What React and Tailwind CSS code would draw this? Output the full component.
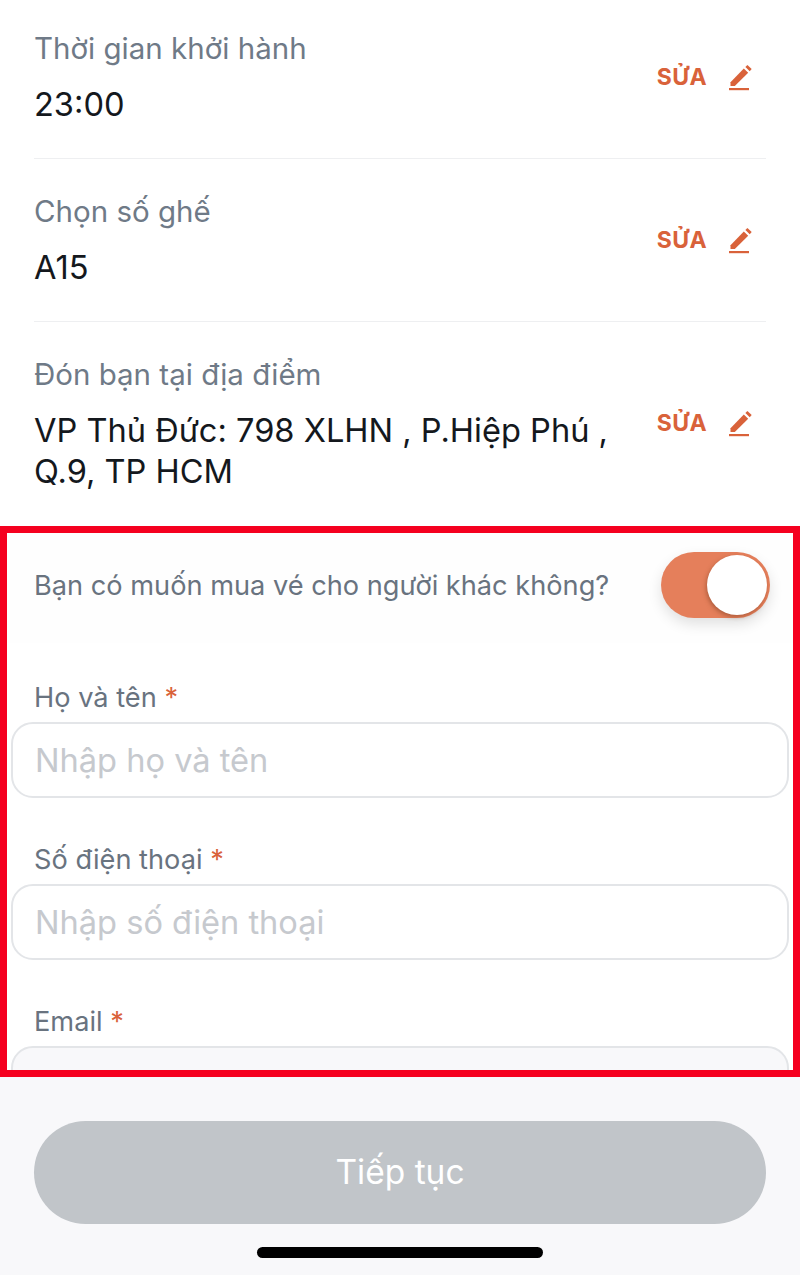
import React from 'react';

function PencilIcon() {
  return (
    <svg viewBox="0 0 24 28" className="w-[24px] h-[28px] text-[#d9623a]" fill="currentColor">
      <path d="M2.5 19.2 15.8 5.6l4.4 4.2L6.8 23H2.5z" />
      <path d="M17.4 4 19.4 2l4.3 4.1-2 2.1z" />
      <rect x="1" y="25" width="20" height="2.2" />
    </svg>
  );
}

function InfoRow({ label, children, divider, className, actionClass }) {
  return (
    <div className={`mx-[34px] flex justify-between ${divider ? 'border-b border-[#eeeff1]' : ''} ${className}`}>
      <div>
        <div className="text-[29.5px] leading-[40px] text-[#6f7a87]">{label}</div>
        <div className="mt-[16px] text-[32.6px] leading-[41px] text-[#14181d] w-[600px]">{children}</div>
      </div>
      <div className={`flex items-center gap-[21px] h-[56px] pr-[14px] shrink-0 ${actionClass}`}>
        <span className="text-[23px] font-bold tracking-[0.4px] text-[#d9623a]">SỬA</span>
        <PencilIcon />
      </div>
    </div>
  );
}

function Field({ label, placeholder, className, inputClass }) {
  return (
    <div className={className}>
      <div className="pl-[34px] h-[38px] text-[27.2px] leading-[38px] text-[#69737f]">
        {label} <span className="text-[#d9623a]">*</span>
      </div>
      <div className={`mt-[5px] mx-[11px] h-[76px] rounded-[22px] border-2 border-[#e3e5e8] pl-[22px] flex items-center text-[32.6px] text-[#c6c9ce] ${inputClass}`}>
        {placeholder}
      </div>
    </div>
  );
}

export default function App() {
  return (
    <div className="relative w-[800px] h-[1275px] overflow-hidden bg-[#f8f8fa] font-['Inter','Noto_Sans',sans-serif]">
      <div className="h-[1077px] bg-white overflow-hidden">
        <InfoRow label="Thời gian khởi hành" divider className="h-[159px] pt-[28px]" actionClass="mt-[21px]">23:00</InfoRow>
        <InfoRow label="Chọn số ghế" divider className="h-[163px] pt-[32px]" actionClass="mt-[21px]">A15</InfoRow>
        <InfoRow label="Đón bạn tại địa điểm" className="h-[204px] pt-[32px]" actionClass="mt-[41px]">
          VP Thủ Đức: 798 XLHN , P.Hiệp Phú ,<br />Q.9, TP HCM
        </InfoRow>

        <div className="h-[117px] pl-[34px] pr-[30px] flex items-center justify-between bg-[#fefefe]">
          <span className="mt-[4px] text-[27.2px] text-[#69737f]">Bạn có muốn mua vé cho người khác không?</span>
          <div className="relative w-[109px] h-[66px] rounded-full bg-[#e57f5b] shadow-[0_6px_14px_rgba(0,0,0,0.12)]">
            <div className="absolute right-[3px] top-[3px] w-[60px] h-[60px] rounded-full bg-white shadow-[-1px_2px_4px_rgba(120,60,30,0.5)]" />
          </div>
        </div>

        <Field label="Họ và tên" placeholder="Nhập họ và tên" className="pt-[36px]" />
        <Field label="Số điện thoại" placeholder="Nhập số điện thoại" className="pt-[43px]" />
        <Field label="Email" placeholder="" className="pt-[43px]" inputClass="bg-[#f8f8fa]" />
      </div>

      <div className="pt-[44px] px-[34px]">
        <div className="h-[103px] rounded-full bg-[#c1c5c9] flex items-center justify-center text-[33.5px] text-white">
          Tiếp tục
        </div>
        <div className="mt-[23px] mx-auto w-[286px] h-[11px] rounded-full bg-black" />
      </div>

      <div className="absolute left-0 top-[526px] w-[800px] h-[551px] border-[7px] border-[#f5001f]" />
    </div>
  );
}
